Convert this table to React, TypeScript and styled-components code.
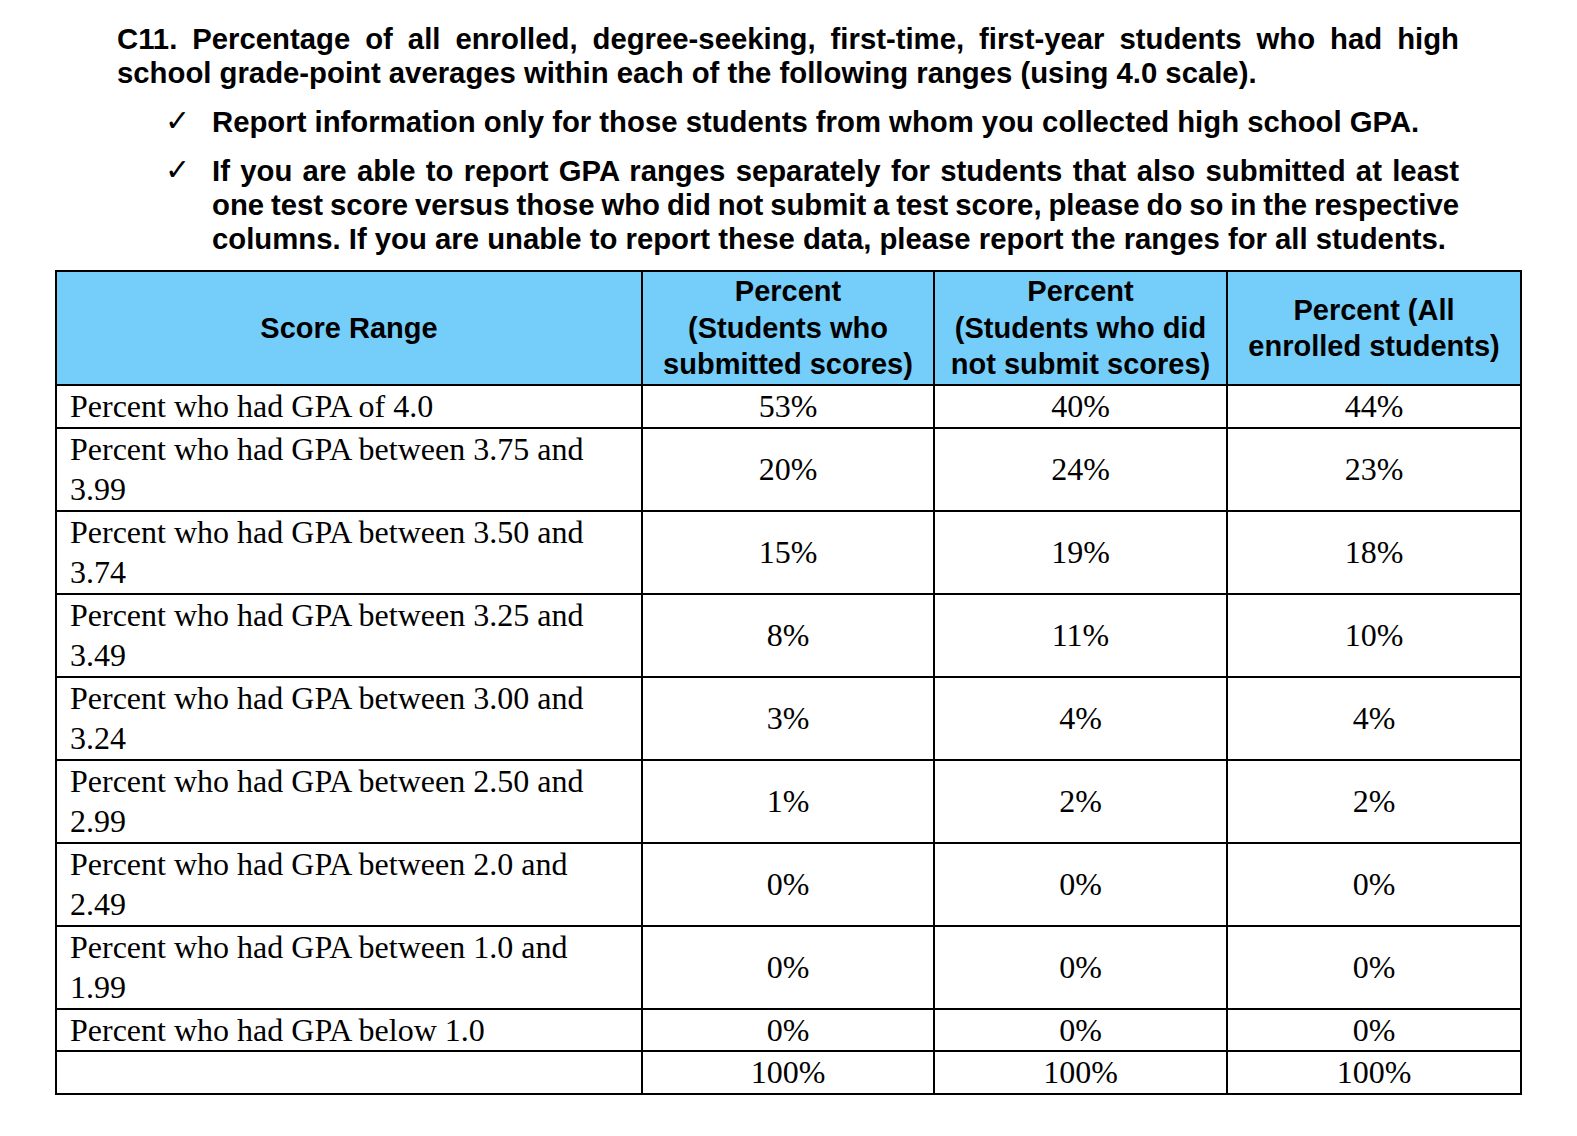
import React from 'react'
import styled, { createGlobalStyle } from 'styled-components'

const GlobalStyle = createGlobalStyle`
  html, body {
    margin: 0;
    padding: 0;
    background: #ffffff;
  }
  body {
    font-family: "Liberation Sans", Arial, sans-serif;
    color: #000000;
  }
`

type GpaRow = { label: string, submitted: string, notSubmitted: string, all: string }
const gpaRows: GpaRow[] = [
  { label: 'Percent who had GPA of 4.0', submitted: '53%', notSubmitted: '40%', all: '44%' },
  { label: 'Percent who had GPA between 3.75 and 3.99', submitted: '20%', notSubmitted: '24%', all: '23%' },
  { label: 'Percent who had GPA between 3.50 and 3.74', submitted: '15%', notSubmitted: '19%', all: '18%' },
  { label: 'Percent who had GPA between 3.25 and 3.49', submitted: '8%', notSubmitted: '11%', all: '10%' },
  { label: 'Percent who had GPA between 3.00 and 3.24', submitted: '3%', notSubmitted: '4%', all: '4%' },
  { label: 'Percent who had GPA between 2.50 and 2.99', submitted: '1%', notSubmitted: '2%', all: '2%' },
  { label: 'Percent who had GPA between 2.0 and 2.49', submitted: '0%', notSubmitted: '0%', all: '0%' },
  { label: 'Percent who had GPA between 1.0 and 1.99', submitted: '0%', notSubmitted: '0%', all: '0%' },
  { label: 'Percent who had GPA below 1.0', submitted: '0%', notSubmitted: '0%', all: '0%' },
  { label: '', submitted: '100%', notSubmitted: '100%', all: '100%' }
]

const Page = styled.div`
  padding: 22px 0 40px 55px;
`

const Intro = styled.div`
  width: 1342px;
  margin-left: 62px;
  font-size: 29.3px;
  font-weight: 700;
  line-height: 34px;
`

const Title = styled.div`
  margin-bottom: 15px;
`

// one printed line, justified to the edge when it is not the last one
const Line = styled.span<{ $fill?: boolean, $tight?: boolean }>`
  display: block;
  text-align: justify;
  text-align-last: ${p => p.$fill ? 'justify' : 'left'};
  word-spacing: ${p => p.$tight ? '-2px' : '0'};
`

const Bullets = styled.ul`
  list-style: none;
  margin: 0 0 14px 50px;
  padding: 0;
  display: flex;
  flex-direction: column;
  gap: 15px;
`

const Bullet = styled.li`
  display: grid;
  grid-template-columns: 45px 1247px;
`

const Check = styled.span`
  font-family: "DejaVu Sans", sans-serif;
  font-weight: 400;
  font-size: 30px;
  line-height: 32px;
  margin-left: -2px;
`

const Table = styled.table`
  width: 1465px;
  border-collapse: collapse;
  table-layout: fixed;
  border: 2px solid #000000;
`

const HeadCell = styled.th`
  background: #74cef9;
  border: 2px solid #000000;
  height: 112px;
  padding: 0 4px;
  font-family: "Liberation Sans", Arial, sans-serif;
  font-size: 29px;
  font-weight: 700;
  line-height: 36.5px;
  text-align: center;
  vertical-align: middle;
`

const Cell = styled.td<{ $label?: boolean }>`
  border: 2px solid #000000;
  padding: ${p => p.$label ? '0 14px 0 13px' : '0 4px'};
  font-family: "Liberation Serif", "Times New Roman", serif;
  font-size: 32px;
  line-height: 40.5px;
  text-align: ${p => p.$label ? 'left' : 'center'};
  vertical-align: middle;
`

export default function App() {
  return (
    <Page>
      <GlobalStyle />
      <Intro>
        <Title>
          <Line $fill>C11. Percentage of all enrolled, degree-seeking, first-time, first-year students who had high</Line>
          <Line>school grade-point averages within each of the following ranges (using 4.0 scale).</Line>
        </Title>
        <Bullets>
          <Bullet>
            <Check>✓</Check>
            <Line>Report information only for those students from whom you collected high school GPA.</Line>
          </Bullet>
          <Bullet>
            <Check>✓</Check>
            <div>
              <Line $fill>If you are able to report GPA ranges separately for students that also submitted at least</Line>
              <Line $fill $tight>one test score versus those who did not submit a test score, please do so in the respective</Line>
              <Line>columns. If you are unable to report these data, please report the ranges for all students.</Line>
            </div>
          </Bullet>
        </Bullets>
      </Intro>
      <Table>
        <colgroup>
          <col style={{ width: 586 }} />
          <col style={{ width: 292 }} />
          <col style={{ width: 293 }} />
          <col style={{ width: 294 }} />
        </colgroup>
        <thead>
          <tr>
            <HeadCell>Score Range</HeadCell>
            <HeadCell>Percent<br />(Students who<br />submitted scores)</HeadCell>
            <HeadCell>Percent<br />(Students who did<br />not submit scores)</HeadCell>
            <HeadCell>Percent (All<br />enrolled students)</HeadCell>
          </tr>
        </thead>
        <tbody>
          {
            gpaRows.map((row, i) => {
              return <tr key={'gpa-row-' + i}>
                <Cell $label>{row.label}</Cell>
                <Cell>{row.submitted}</Cell>
                <Cell>{row.notSubmitted}</Cell>
                <Cell>{row.all}</Cell>
              </tr>
            })
          }
        </tbody>
      </Table>
    </Page>
  )
}
